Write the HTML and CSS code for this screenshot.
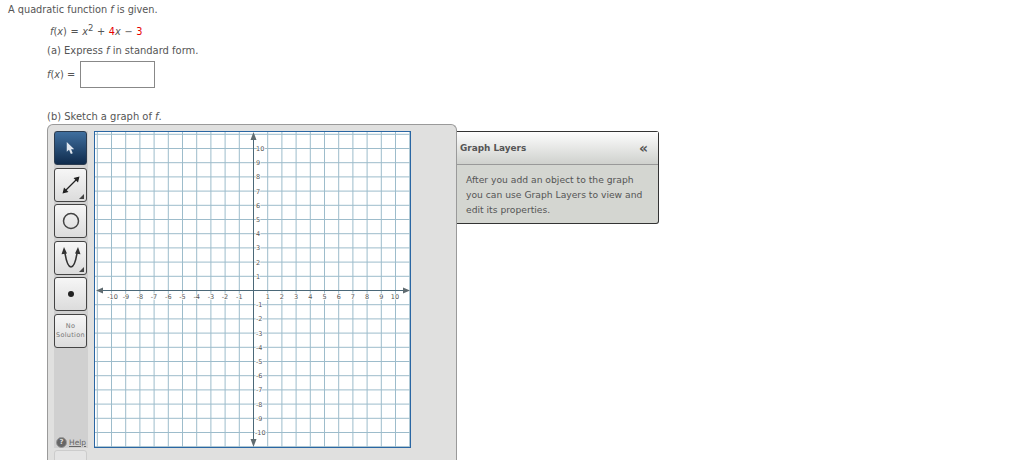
FILE: index.html
```html
<!DOCTYPE html>
<html lang="en">
<head>
    <meta charset="UTF-8">
    <title>Quadratic function</title>
    <link rel="stylesheet" href="styles.css">
</head>
<body>

<!-- Question text -->
<p class="intro">A quadratic function <i>f</i> is given.</p>
<p class="formula"><i>f</i>(<i>x</i>) = <i>x</i><sup>2</sup> + <span class="red">4</span><i>x</i> &minus; <span class="red">3</span></p>
<p class="part">(a) Express <i>f</i> in standard form.</p>
<div class="answer">
    <span><i>f</i>(<i>x</i>) =</span>
    <input class="answer-box" type="text">
</div>
<p class="part part-b">(b) Sketch a graph of <i>f</i>.</p>

<div class="graph-row">
    <div class="graph-tool">
        <!-- Tool buttons -->
        <div class="toolbar">
            <div class="tool tool-active">
                <svg width="9" height="12" viewBox="0 0 12 16"><path d="M1 0V13l3-2.600L6.500 16 9 15 6.800 9.500H11z" fill="#dfe6ee"/></svg>
            </div>
            <div class="tool tool-more">
                <svg width="20" height="20" viewBox="0 0 20 20"><path d="M4.500 15.500L15.500 4.500" stroke="#222" stroke-width="1.300"/><path d="M1.500 18.500l1.500-6 4.500 4.500zM18.500 1.500l-1.500 6-4.500-4.500z" fill="#222"/></svg>
            </div>
            <div class="tool">
                <svg width="24" height="24" viewBox="0 0 24 24"><circle cx="12" cy="12" r="7.500" fill="none" stroke="#444" stroke-width="1.500"/></svg>
            </div>
            <div class="tool tool-more">
                <svg width="26" height="26" viewBox="0 0 26 26"><path d="M6.800 7C8 15 10 22 13 22S18 15 19.200 7" fill="none" stroke="#333" stroke-width="1.600"/><path d="M6 2l3 6.500-5.500.8zM20 2l-3 6.500 5.500.8z" fill="#333"/></svg>
            </div>
            <div class="tool">
                <span class="dot"></span>
            </div>
            <div class="tool tool-text">No<br>Solution</div>
            <div class="help">
                <span class="help-icon">?</span>
                <a class="help-link">Help</a>
            </div>
            <div class="tool tool-off"><span class="off-square"></span></div>
        </div>

        <!-- Coordinate plane -->
        <svg class="plane" width="317" height="317" viewBox="0 0 317 317">
            <rect class="plane-bg" width="317" height="317"/>
            <path class="grid" d="M3.300 0V317M17.500 0V317M31.700 0V317M45.900 0V317M60.100 0V317M74.300 0V317M88.500 0V317M102.700 0V317M116.900 0V317M131.100 0V317M145.300 0V317M173.700 0V317M187.900 0V317M202.100 0V317M216.300 0V317M230.500 0V317M244.700 0V317M258.900 0V317M273.100 0V317M287.300 0V317M301.500 0V317M315.700 0V317"/>
            <path class="grid" d="M0 3.300H317M0 17.500H317M0 31.700H317M0 45.900H317M0 60.100H317M0 74.300H317M0 88.500H317M0 102.700H317M0 116.900H317M0 131.100H317M0 145.300H317M0 173.700H317M0 187.900H317M0 202.100H317M0 216.300H317M0 230.500H317M0 244.700H317M0 258.900H317M0 273.100H317M0 287.300H317M0 301.500H317M0 315.700H317"/>
            <path class="axis" d="M159.500 3V313M3 159.500H314"/>
            <path class="arrow" d="M159.500 1l3 8h-6zM159.500 316l3-8h-6zM2 159.500l7-3v6zM316 159.500l-7-3v6z"/>
            <g class="labels-x">
                <text x="18.500" y="167.500">-10</text><text x="32" y="167.500">-9</text><text x="46" y="167.500">-8</text><text x="60" y="167.500">-7</text><text x="74.300" y="167.500">-6</text><text x="88.500" y="167.500">-5</text><text x="102.700" y="167.500">-4</text><text x="117" y="167.500">-3</text><text x="131" y="167.500">-2</text><text x="145.300" y="167.500">-1</text>
                <text x="173.700" y="167.500">1</text><text x="187.900" y="167.500">2</text><text x="202.100" y="167.500">3</text><text x="216.300" y="167.500">4</text><text x="230.500" y="167.500">5</text><text x="244.700" y="167.500">6</text><text x="258.900" y="167.500">7</text><text x="273.100" y="167.500">8</text><text x="287.300" y="167.500">9</text><text x="301" y="167.500">10</text>
            </g>
            <g class="labels-y">
                <text x="162" y="20">10</text><text x="162" y="34.200">9</text><text x="162" y="48.400">8</text><text x="162" y="62.600">7</text><text x="162" y="76.800">6</text><text x="162" y="91">5</text><text x="162" y="105.200">4</text><text x="162" y="119.400">3</text><text x="162" y="133.600">2</text><text x="162" y="147.800">1</text>
                <text x="162" y="176.200">-1</text><text x="162" y="190.400">-2</text><text x="162" y="204.600">-3</text><text x="162" y="218.800">-4</text><text x="162" y="233">-5</text><text x="162" y="247.200">-6</text><text x="162" y="261.400">-7</text><text x="162" y="275.600">-8</text><text x="162" y="289.800">-9</text><text x="161" y="304">-10</text>
            </g>
            <rect class="frame" x="0.500" y="0.500" width="316" height="316"/>
        </svg>
    </div>

    <!-- Graph Layers side panel -->
    <div class="layers">
        <div class="layers-head">
            <span class="layers-title">Graph Layers</span>
            <span class="layers-close">&laquo;</span>
        </div>
        <div class="layers-body">After you add an object to the graph you can use Graph Layers to view and edit its properties.</div>
    </div>
</div>

</body>
</html>
```
FILE: styles.css
```css
html, body {
    height: 460px;
    overflow: hidden;
}

body {
    margin: 0;
    background-color: #fff;
    color: #555;
    font-family: "DejaVu Sans", Verdana, sans-serif;
    font-size: 9.750px;
    line-height: 12px;
}

p {
    margin: 0;
}

.intro {
    padding: 4px 0 0 8px;
}

.formula {
    padding: 10px 0 0 50px;
    word-spacing: 0.500px;
}

.formula sup {
    font-size: 8.500px;
    line-height: 0;
}

.red {
    color: #e60000;
}

.part {
    padding: 7px 0 0 47px;
    font-size: 9.950px;
}

.answer {
    display: flex;
    align-items: center;
    gap: 5px;
    padding: 4px 0 0 47px;
}

.answer-box {
    box-sizing: border-box;
    width: 75px;
    height: 27px;
    margin: 0;
    padding: 0;
    border: 1px solid #888;
    background: #fff;
}

.part-b {
    padding-top: 23px;
}

.graph-row {
    display: flex;
    align-items: flex-start;
    padding: 1px 0 0 47px;
}

.graph-tool {
    box-sizing: border-box;
    display: flex;
    align-items: flex-start;
    gap: 6px;
    width: 410px;
    height: 336px;
    padding: 6px;
    overflow: hidden;
    background-color: #e0e0df;
    border: 1px solid #9a9a9a;
    border-bottom: none;
    border-radius: 6px 6px 0 0;
}

.toolbar {
    box-sizing: border-box;
    flex: none;
    width: 34px;
    height: 317px;
    background-color: #d0d0d0;
}

.tool {
    box-sizing: border-box;
    display: flex;
    align-items: center;
    justify-content: center;
    position: relative;
    width: 33px;
    height: 34px;
    margin-bottom: 2.600px;
    background: linear-gradient(#f6f6f6, #dcdcdc);
    border: 1px solid #444;
    border-radius: 3px;
}

.tool-active {
    background: linear-gradient(#3f6f9f, #0f2b4c);
    border-color: #2b3c50;
}

/* small corner mark for tools with more options */
.tool-more::after {
    content: "";
    position: absolute;
    right: 2px;
    bottom: 2px;
    border-style: solid;
    border-width: 0 0 5px 5px;
    border-color: transparent transparent #444 transparent;
}

.dot {
    width: 6px;
    height: 6px;
    border-radius: 50%;
    background-color: #222;
}

.tool-text {
    color: #777;
    font-size: 6.500px;
    line-height: 9px;
    letter-spacing: 0.300px;
    text-align: center;
}

.help {
    display: flex;
    align-items: center;
    gap: 2px;
    height: 12px;
    margin-top: 89px;
    padding-left: 2px;
    font-size: 7.500px;
    line-height: 10px;
}

.help-icon {
    box-sizing: border-box;
    width: 11px;
    height: 11px;
    border-radius: 50%;
    background-color: #666;
    border: 1px solid #999;
    color: #ddd;
    font-size: 7px;
    font-weight: bold;
    line-height: 9px;
    text-align: center;
}

.help-link {
    color: #666;
    text-decoration: underline;
}

.tool-off {
    margin-top: 1px;
    background: #e4e4e4;
    border-color: #ccc;
}

.off-square {
    width: 10px;
    height: 10px;
    background-color: #d6d6d6;
}

.plane {
    flex: none;
}

.plane-bg {
    fill: #fff;
}

.grid {
    fill: none;
    stroke: #9dbccb;
    stroke-width: 1;
}

.axis {
    fill: none;
    stroke: #4b6878;
    stroke-width: 1;
}

.arrow {
    fill: #5f6b70;
}

.frame {
    fill: none;
    stroke: #2a66a3;
    stroke-width: 1;
}

.plane text {
    fill: #555;
    stroke: #fff;
    stroke-width: 1.500px;
    paint-order: stroke;
    font-family: "DejaVu Sans", Verdana, sans-serif;
    font-size: 6.500px;
}

.labels-x text {
    text-anchor: middle;
}

.layers {
    box-sizing: border-box;
    width: 202px;
    height: 93px;
    margin-top: 7px;
    border: 1px solid #333;
    border-left: none;
    border-radius: 0 3px 3px 0;
    background-color: #d4d6d1;
    font-size: 9.200px;
    line-height: 15px;
}

.layers-head {
    box-sizing: border-box;
    display: flex;
    justify-content: space-between;
    align-items: center;
    height: 33px;
    padding: 0 10px 0 3px;
    background: linear-gradient(#fdfdfd, #cfd1cd);
    border-bottom: 1px solid #999;
}

.layers-title {
    font-size: 8.900px;
    font-weight: bold;
}

.layers-close {
    font-size: 14px;
    font-weight: bold;
}

.layers-body {
    padding: 7px 9px 0;
}
```
